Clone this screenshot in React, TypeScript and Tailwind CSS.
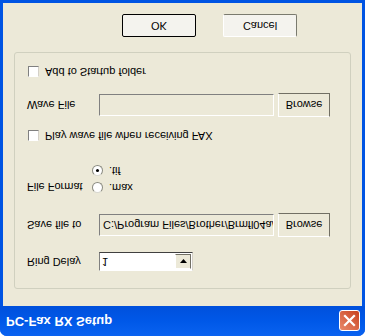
import { ReactNode } from 'react'

const font = { fontFamily: '"Liberation Sans", Arial, sans-serif' }

function Button({ children, primary }: { children: ReactNode; primary?: boolean }) {
  return (
    <div
      className={`w-[74px] h-[23px] flex items-center justify-center text-[11px] text-black bg-[#f4f3ee] rounded-[2px] ${
        primary ? 'border border-black' : 'border border-t-[#fff] border-l-[#fff] border-b-[#7a7a6e] border-r-[#7a7a6e]'
      }`}
    >
      {children}
    </div>
  )
}

function Browse() {
  return (
    <div className="w-[52px] h-[24px] flex items-center justify-center text-[11px] text-black bg-[#ece9d8] border border-t-[#fff] border-l-[#fff] border-b-[#716f64] border-r-[#716f64]">
      Browse
    </div>
  )
}

function Checkbox({ label }: { label: string }) {
  return (
    <div className="flex items-center gap-[6px] h-[13px]">
      <span className="w-[11px] h-[11px] bg-white border border-t-[#fff] border-l-[#808080] border-b-[#808080] border-r-[#d4d0c8]" />
      <span className="text-[11px] leading-[13px] text-black">{label}</span>
    </div>
  )
}

function Radio({ label, checked }: { label: string; checked?: boolean }) {
  return (
    <div className="flex items-center gap-[6px] h-[13px]">
      <span className="w-[11px] h-[11px] rounded-full bg-white border border-[#8a8a80] border-t-[#d8d8d0] flex items-center justify-center">
        {checked && <span className="w-[3px] h-[3px] rounded-full bg-black" />}
      </span>
      <span className="text-[11px] leading-[13px] text-black">{label}</span>
    </div>
  )
}

export default function App() {
  return (
    <div className="w-[365px] h-[336px] -scale-y-100 bg-[#0054e3] flex flex-col rounded-t-[7px] overflow-hidden" style={font}>
      <div className="h-[30px] flex items-center justify-between pl-[6px] pr-[5px] bg-gradient-to-b from-[#0a62f0] via-[#0058e8] to-[#0050dc]">
        <span className="text-white font-bold text-[13px]">PC-Fax RX Setup</span>
        <span className="w-[21px] h-[21px] rounded-[3px] border border-white bg-gradient-to-br from-[#e8886a] to-[#c8401a] flex items-center justify-center">
          <svg width="13" height="13" viewBox="0 0 13 13">
            <path d="M2 2 L11 11 M11 2 L2 11" stroke="white" strokeWidth="2.2" strokeLinecap="square" />
          </svg>
        </span>
      </div>
      <div className="flex-1 mx-[3px] mb-[3px] bg-[#ece9d8] pt-[17px] px-[11px]">
        <div className="h-[237px] border border-[#d0d0bf] rounded-[3px] pl-[12px] pt-[17px] flex flex-col text-[11px] leading-[13px] text-black">
          <div className="flex items-center h-[19px]">
            <span className="w-[72px]">Ring Delay</span>
            <div className="w-[94px] h-[19px] bg-white border border-t-[#fff] border-l-[#808080] border-b-[#404040] border-r-[#d4d0c8] flex items-center justify-between">
              <span className="pl-[2px]">1</span>
              <span className="w-[16px] h-[15px] mr-[1px] bg-[#ece9d8] border border-t-[#fff] border-l-[#fff] border-b-[#716f64] border-r-[#716f64] flex items-center justify-center">
                <svg width="7" height="4" viewBox="0 0 7 4">
                  <path d="M0 0 H7 L3.5 4 Z" fill="black" />
                </svg>
              </span>
            </div>
          </div>
          <div className="flex items-center h-[24px] mt-[15px]">
            <span className="w-[72px]">Save file to</span>
            <div className="w-[175px] h-[22px] bg-[#ece9d8] border border-t-[#fff] border-l-[#808080] border-b-[#808080] border-r-[#fff] flex items-center pl-[3px] overflow-hidden whitespace-nowrap">
              C:/Program Files/Brother/Brmfl04a/
            </div>
            <span className="ml-[4px]">
              <Browse />
            </span>
          </div>
          <div className="flex mt-[19px]">
            <span className="w-[72px] pt-[1px]">File Format</span>
            <div className="flex flex-col gap-[4px] -ml-[7px]">
              <Radio label=".max" />
              <Radio label=".tif" checked />
            </div>
          </div>
          <div className="mt-[22px] ml-[1px]">
            <Checkbox label="Play wave file when receiving FAX" />
          </div>
          <div className="flex items-center h-[24px] mt-[12px]">
            <span className="w-[72px]">Wave File</span>
            <div className="w-[175px] h-[22px] bg-[#ece9d8] border border-t-[#fff] border-l-[#808080] border-b-[#808080] border-r-[#fff]" />
            <span className="ml-[4px]">
              <Browse />
            </span>
          </div>
          <div className="mt-[15px] ml-[1px]">
            <Checkbox label="Add to Startup folder" />
          </div>
        </div>
        <div className="flex gap-[27px] pl-[108px] mt-[15px]">
          <Button primary>OK</Button>
          <Button>Cancel</Button>
        </div>
      </div>
    </div>
  )
}
